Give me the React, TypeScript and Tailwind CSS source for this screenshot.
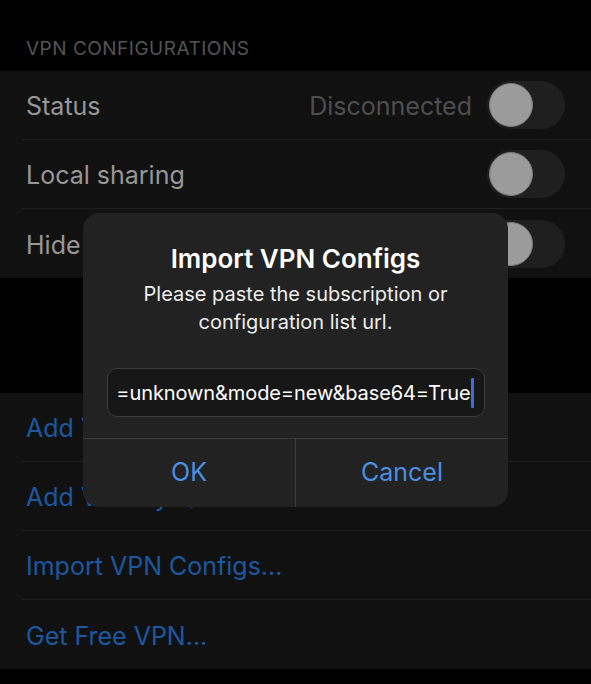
import React from 'react';

const Toggle: React.FC = () => (
  <div className="w-[78px] h-[48px] shrink-0 rounded-full bg-[#1f1f1f] p-[2px] flex items-center">
    <div className="w-[44px] h-[44px] rounded-full bg-[#9b9b9b] border border-[#7a7a7a]" />
  </div>
);

const Row: React.FC<{ children: React.ReactNode; last?: boolean }> = ({ children, last }) => (
  <div className="pl-[22px]">
    <div className={`h-[69px] flex items-center pr-[26px] pl-[4px] ${last ? '' : 'border-b border-[#202020]'}`}>
      {children}
    </div>
  </div>
);

const App: React.FC = () => {
  return (
    <div className="relative w-[591px] h-[684px] bg-black overflow-hidden font-['Inter','Noto_Sans',sans-serif]">
      {/* 设置页 */}
      <div className="pt-[37px]">
        <div className="px-[26px] text-[19px] leading-[23px] text-[#545454] tracking-[0.5px]">VPN CONFIGURATIONS</div>
        <div className="mt-[11px] bg-[#111111]">
          <Row>
            <span className="text-[25px] text-[#979797] flex-1 pt-[4px]">Status</span>
            <span className="text-[25px] text-[#4e4e4e] mr-[15px] pt-[4px]">Disconnected</span>
            <Toggle />
          </Row>
          <Row>
            <span className="text-[25px] text-[#979797] flex-1 pt-[4px]">Local sharing</span>
            <Toggle />
          </Row>
          <Row last>
            <span className="text-[25px] text-[#979797] flex-1 pt-[4px]">Hide VPN icon</span>
            <Toggle />
          </Row>
        </div>

        <div className="mt-[115px] bg-[#111111]">
          <Row>
            <span className="text-[25px] text-[#1c58a0] pt-[4px]">Add VPN Manually...</span>
          </Row>
          <Row>
            <span className="text-[25px] text-[#1c58a0] pt-[4px]">Add VPN by QR Code...</span>
          </Row>
          <Row>
            <span className="text-[25px] text-[#1c58a0] pt-[4px]">Import VPN Configs...</span>
          </Row>
          <Row last>
            <span className="text-[25px] text-[#1c58a0] pt-[4px]">Get Free VPN...</span>
          </Row>
        </div>
      </div>

      {/* 导入弹窗 */}
      <div className="absolute left-[83px] top-[213px] w-[425px] h-[294px] rounded-[16px] bg-[#222222] flex flex-col">
        <div className="flex-1 flex flex-col items-center px-[23px] pt-[30px]">
          <div className="text-[26px] leading-[32px] font-semibold text-white">Import VPN Configs</div>
          <div className="mt-[5px] text-[20px] leading-[28px] text-[#ededed] text-center">
            Please paste the subscription or<br />configuration list url.
          </div>
          <div className="mt-[32px] w-[378px] h-[49px] rounded-[10px] border border-[#3c3c3c] bg-[#171717] flex items-center justify-end overflow-hidden pr-[10px]">
            <span className="whitespace-nowrap text-[20px] tracking-[-0.1px] text-white">=unknown&amp;mode=new&amp;base64=True</span>
            <span className="w-[3px] h-[30px] shrink-0 bg-[#3d6de0] rounded-[1px]" />
          </div>
        </div>
        <div className="h-[69px] border-t border-[#3a3a3a] flex">
          <div className="w-[213px] flex items-center justify-center border-r border-[#3a3a3a] text-[25px] text-[#4a8fe2]">OK</div>
          <div className="flex-1 flex items-center justify-center text-[25px] text-[#4a8fe2]">Cancel</div>
        </div>
      </div>
    </div>
  );
};

export default App;
